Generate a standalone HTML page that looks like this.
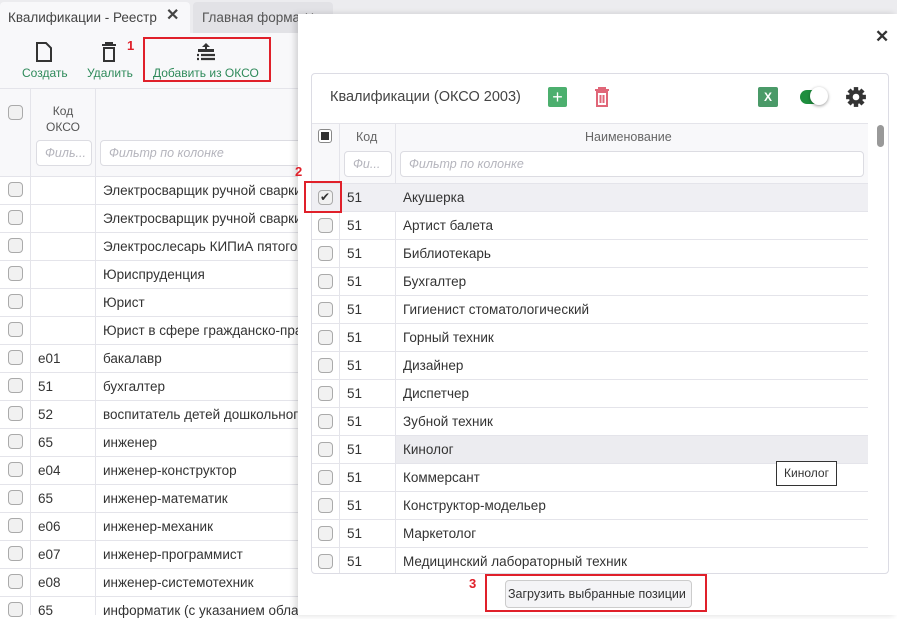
<!DOCTYPE html>
<html><head><meta charset="utf-8"><style>
*{box-sizing:border-box;margin:0;padding:0}
body{width:897px;height:615px;overflow:hidden;background:#fff;font-family:"Liberation Sans","Noto Sans CJK SC",sans-serif;font-size:13.5px;color:#333;position:relative}
.abs{position:absolute}
.cb{position:absolute;width:15px;height:15px;border:1px solid #aaa;border-radius:4px;background:#f1f1f1}
.red{position:absolute;border:2px solid #e0202a}
.num{position:absolute;color:#e0202a;font-weight:bold;font-size:13px}
.hl{position:absolute;height:1px;background:#e4e4ea}
.vl{position:absolute;width:1px;background:#e4e4ea}
.t{position:absolute;white-space:nowrap;line-height:16px}
.inp{position:absolute;border:1px solid #dcdce2;border-radius:4px;background:#fff;color:#b5b5bd;font-style:italic;font-size:12.5px;line-height:24px;padding-left:8px;white-space:nowrap;overflow:hidden}
</style></head><body>
<div class="abs" style="left:0;top:0;width:897px;height:33px;background:#ececef"></div>
<div class="abs" style="left:0;top:2px;width:190px;height:31px;background:#f8f8fa;border-radius:4px 4px 0 0"></div>
<div class="t" style="left:8px;top:10px;font-size:13.5px;color:#444">Квалификации - Реестр</div>
<div class="t" style="left:166px;top:8px;font-size:16px;color:#444;font-weight:bold">✕</div>
<div class="abs" style="left:193px;top:2px;width:140px;height:31px;background:#e2e2e6;border-radius:4px 4px 0 0"></div>
<div class="t" style="left:202px;top:10px;font-size:13.5px;color:#555">Главная форма ✕</div>
<div class="abs" style="left:0;top:33px;width:300px;height:55px;background:#f8f8fa"></div>
<svg class="abs" style="left:35px;top:41px" width="18" height="22" viewBox="0 0 18 22"><path d="M2 2h9l5 5v13H2z" fill="none" stroke="#333" stroke-width="2"/></svg>
<div class="t" style="left:22px;top:65px;font-size:12px;color:#2e8a5a">Создать</div>
<svg class="abs" style="left:101px;top:41px" width="16" height="22" viewBox="0 0 16 22"><path d="M1 4h14M5 4V2h6v2M3 7h10v13H3z" fill="none" stroke="#333" stroke-width="2"/></svg>
<div class="t" style="left:87px;top:65px;font-size:12px;color:#2e8a5a">Удалить</div>
<svg class="abs" style="left:195px;top:41px" width="22" height="22" viewBox="0 0 22 22"><path d="M11 2l-4 4h3v4h2V6h3z" fill="#333"/><rect x="3" y="8" width="16" height="3" fill="#333"/><path d="M2 14h2M6 14h14M2 18h2M6 18h14" stroke="#333" stroke-width="2.2"/></svg>
<div class="t" style="left:153px;top:65px;font-size:12px;color:#2e8a5a">Добавить из ОКСО</div>
<div class="red" style="left:143px;top:37px;width:128px;height:45px"></div>
<div class="num" style="left:127px;top:38px">1</div>
<div class="abs" style="left:0;top:88px;width:300px;height:88px;background:#f8f8fa"></div>
<div class="hl" style="left:0;top:88px;width:300px"></div>
<div class="vl" style="left:30px;top:88px;height:527px"></div>
<div class="vl" style="left:95px;top:88px;height:527px"></div>
<div class="cb" style="left:8px;top:105px"></div>
<div class="t" style="left:45px;top:103px;font-size:12px;color:#555;text-align:center;width:36px">Код<br>ОКСО</div>
<div class="inp" style="left:36px;top:140px;width:56px;height:26px">Филь...</div>
<div class="inp" style="left:100px;top:140px;width:210px;height:26px">Фильтр по колонке</div>
<div id="left"></div>
<div class="abs" style="left:298px;top:14px;width:599px;height:601px;background:#fff;box-shadow:-3px 0 6px rgba(0,0,0,.15)"></div>
<div class="t" style="left:875px;top:29px;font-size:17px;color:#333;font-weight:bold">✕</div>
<div class="abs" style="left:311px;top:73px;width:578px;height:501px;border:1px solid #dcdce4;border-radius:4px;background:#fff"></div>
<div class="t" style="left:330px;top:89px;font-size:14.5px;color:#444">Квалификации (ОКСО 2003)</div>
<div class="abs" style="left:548px;top:87px;width:19px;height:20px;background:#4caf6e;border-radius:2px;color:#fff;font-size:18px;line-height:20px;text-align:center">+</div>
<svg class="abs" style="left:594px;top:87px" width="16" height="20" viewBox="0 0 16 20"><path d="M1 3h14M5 3V1h6v2M3 5h10v14H3zM6.5 8v8M9.5 8v8" fill="none" stroke="#e06678" stroke-width="2"/></svg>
<div class="abs" style="left:758px;top:87px;width:20px;height:20px;background:#4a9a68;border-radius:2px;color:#fff;font-size:12px;line-height:20px;text-align:center;font-weight:bold">X</div>
<div class="abs" style="left:800px;top:90px;width:24px;height:14px;background:#1e8e3e;border-radius:7px"></div>
<div class="abs" style="left:810px;top:87px;width:18px;height:18px;background:#fff;border-radius:50%;box-shadow:0 1px 3px rgba(0,0,0,.4)"></div>
<svg class="abs" style="left:845px;top:86px" width="22" height="22" viewBox="0 0 20 20"><g fill="#333"><circle cx="10" cy="10" r="6.5"/><rect x="8" y="1" width="4" height="18"/><rect x="1" y="8" width="18" height="4"/><rect x="8" y="1" width="4" height="18" transform="rotate(45 10 10)"/><rect x="8" y="1" width="4" height="18" transform="rotate(-45 10 10)"/></g><circle cx="10" cy="10" r="3" fill="#fff"/></svg>
<div class="abs" style="left:312px;top:123px;width:556px;height:60px;background:#f8f8fa"></div>
<div class="hl" style="left:312px;top:123px;width:556px"></div>
<div class="vl" style="left:339px;top:123px;height:450px"></div>
<div class="vl" style="left:395px;top:123px;height:450px"></div>
<div class="abs" style="left:318px;top:129px;width:14px;height:14px;border:1px solid #888;border-radius:3px;background:#fff"><div style="margin:2px;width:8px;height:8px;background:#333"></div></div>
<div class="t" style="left:356px;top:129px;font-size:12.5px;color:#666">Код</div>
<div class="t" style="left:585px;top:129px;font-size:12.5px;color:#666">Наименование</div>
<div class="inp" style="left:344px;top:151px;width:48px;height:26px">Фи...</div>
<div class="inp" style="left:400px;top:151px;width:464px;height:26px">Фильтр по колонке</div>
<div class="abs" style="left:877px;top:125px;width:7px;height:22px;background:#999;border-radius:4px"></div>
<div id="right"></div>
<div class="red" style="left:304px;top:181px;width:38px;height:32px"></div>
<div class="num" style="left:295px;top:164px">2</div>
<div class="abs" style="left:776px;top:461px;width:61px;height:25px;border:1px solid #333;background:#fff;font-size:12px;line-height:23px;text-align:center;color:#333">Кинолог</div>
<div class="abs" style="left:505px;top:580px;width:187px;height:28px;border:1px solid #ccc;border-radius:4px;background:#f4f4f6;font-size:12.5px;line-height:26px;padding-left:2px;overflow:hidden;white-space:nowrap;color:#333">Загрузить выбранные позиции</div>
<div class="red" style="left:485px;top:574px;width:222px;height:38px"></div>
<div class="num" style="left:469px;top:576px">3</div>
<script>
var L=[["","Электросварщик ручной сварки"],["","Электросварщик ручной сварки"],["","Электрослесарь КИПиА пятого"],["","Юриспруденция"],["","Юрист"],["","Юрист в сфере гражданско-правового"],["е01","бакалавр"],["51","бухгалтер"],["52","воспитатель детей дошкольного"],["65","инженер"],["е04","инженер-конструктор"],["65","инженер-математик"],["е06","инженер-механик"],["е07","инженер-программист"],["е08","инженер-системотехник"],["65","информатик (с указанием области"]];
var h="";L.forEach(function(r,i){var y=176+i*28;h+='<div class="hl" style="left:0;top:'+y+'px;width:300px"></div><div class="cb" style="left:8px;top:'+(y+6)+'px"></div><div class="t" style="left:38px;top:'+(y+7)+'px">'+r[0]+'</div><div class="t" style="left:103px;top:'+(y+7)+'px">'+r[1]+'</div>';});
document.getElementById("left").innerHTML=h;
var R=["Акушерка","Артист балета","Библиотекарь","Бухгалтер","Гигиенист стоматологический","Горный техник","Дизайнер","Диспетчер","Зубной техник","Кинолог","Коммерсант","Конструктор-модельер","Маркетолог","Медицинский лабораторный техник"];
h="";R.forEach(function(r,i){var y=183+i*28;if(i==0)h+='<div class="abs" style="left:312px;top:'+y+'px;width:556px;height:28px;background:#efeff3"></div>';if(i==9)h+='<div class="abs" style="left:396px;top:'+y+'px;width:472px;height:28px;background:#ececf0"></div>';h+='<div class="hl" style="left:312px;top:'+y+'px;width:556px"></div><div class="cb" style="left:318px;top:'+(y+7)+'px"></div>'+(i==0?'<div class="t" style="left:320px;top:'+(y+6)+'px;font-size:12px;color:#333">✔</div>':'')+'<div class="t" style="left:347px;top:'+(y+7)+'px">51</div><div class="t" style="left:403px;top:'+(y+7)+'px">'+r+'</div>';});
document.getElementById("right").innerHTML=h;
</script>
</body></html>
